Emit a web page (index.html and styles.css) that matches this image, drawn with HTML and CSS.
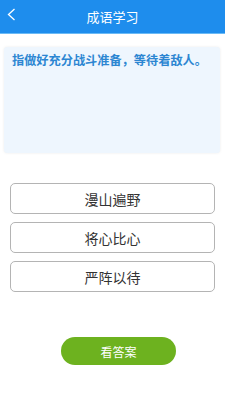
FILE: index.html
```html
<!DOCTYPE html>
<html lang="zh-CN">
<head>
    <meta charset="UTF-8">
    <meta name="viewport" content="width=device-width, initial-scale=1.0">
    <title>成语学习</title>
    <link rel="stylesheet" href="styles.css">
</head>
<body>
    <div class="header">
        <span class="back">
            <svg width="9" height="13" viewBox="0 0 9 13"><path d="M7.5 1 L1.5 6.5 L7.5 12" fill="none" stroke="#fff" stroke-width="1.3"/></svg>
        </span>
        <h1>成语学习</h1>
    </div>
    <div class="card">
        <p class="question">指做好充分战斗准备，等待着敌人。</p>
    </div>
    <div class="options">
        <button class="option">漫山遍野</button>
        <button class="option">将心比心</button>
        <button class="option">严阵以待</button>
    </div>
    <div class="answer-wrap">
        <button class="answer">看答案</button>
    </div>
</body>
</html>
```

FILE: styles.css
```css
body {
    margin: 0;
    font-family: "Noto Sans CJK SC", "Liberation Sans", sans-serif;
    background: #fff;
    width: 225px;
    height: 400px;
}
.header {
    height: 33px;
    background: #1e8ded;
    border-bottom: 1px solid #6bbaf5;
    display: flex;
    align-items: center;
    justify-content: center;
    position: relative;
}
.back {
    position: absolute;
    left: 7px;
    top: 8px;
    line-height: 0;
}
h1 {
    margin: 0;
    font-size: 13px;
    font-weight: normal;
    color: #fff;
}
.card {
    margin: 13px 5px 0 4px;
    height: 106px;
    background: #eef6fe;
    border-radius: 3px;
    box-shadow: 0 0 3px rgba(0, 0, 0, 0.08);
    padding: 0 6px 0 8px;
}
.question {
    margin: 0;
    padding-top: 3px;
    font-size: 12.2px;
    font-weight: bold;
    color: #2c86d2;
    line-height: 20px;
    white-space: nowrap;
}
.options {
    margin-top: 30px;
    display: flex;
    flex-direction: column;
    gap: 8px;
    padding: 0 10px;
}
.option {
    height: 31px;
    border: 1px solid #b4b4b4;
    border-radius: 5px;
    background: #fff;
    font-family: inherit;
    font-size: 14px;
    color: #333;
    padding: 0;
}
.answer-wrap {
    margin-top: 45px;
    display: flex;
    justify-content: center;
    padding-left: 12px;
}
.answer {
    width: 115px;
    height: 28px;
    border: none;
    border-radius: 14px;
    background: #6db21f;
    color: #fff;
    font-family: inherit;
    font-size: 12px;
    padding: 0;
}
```
